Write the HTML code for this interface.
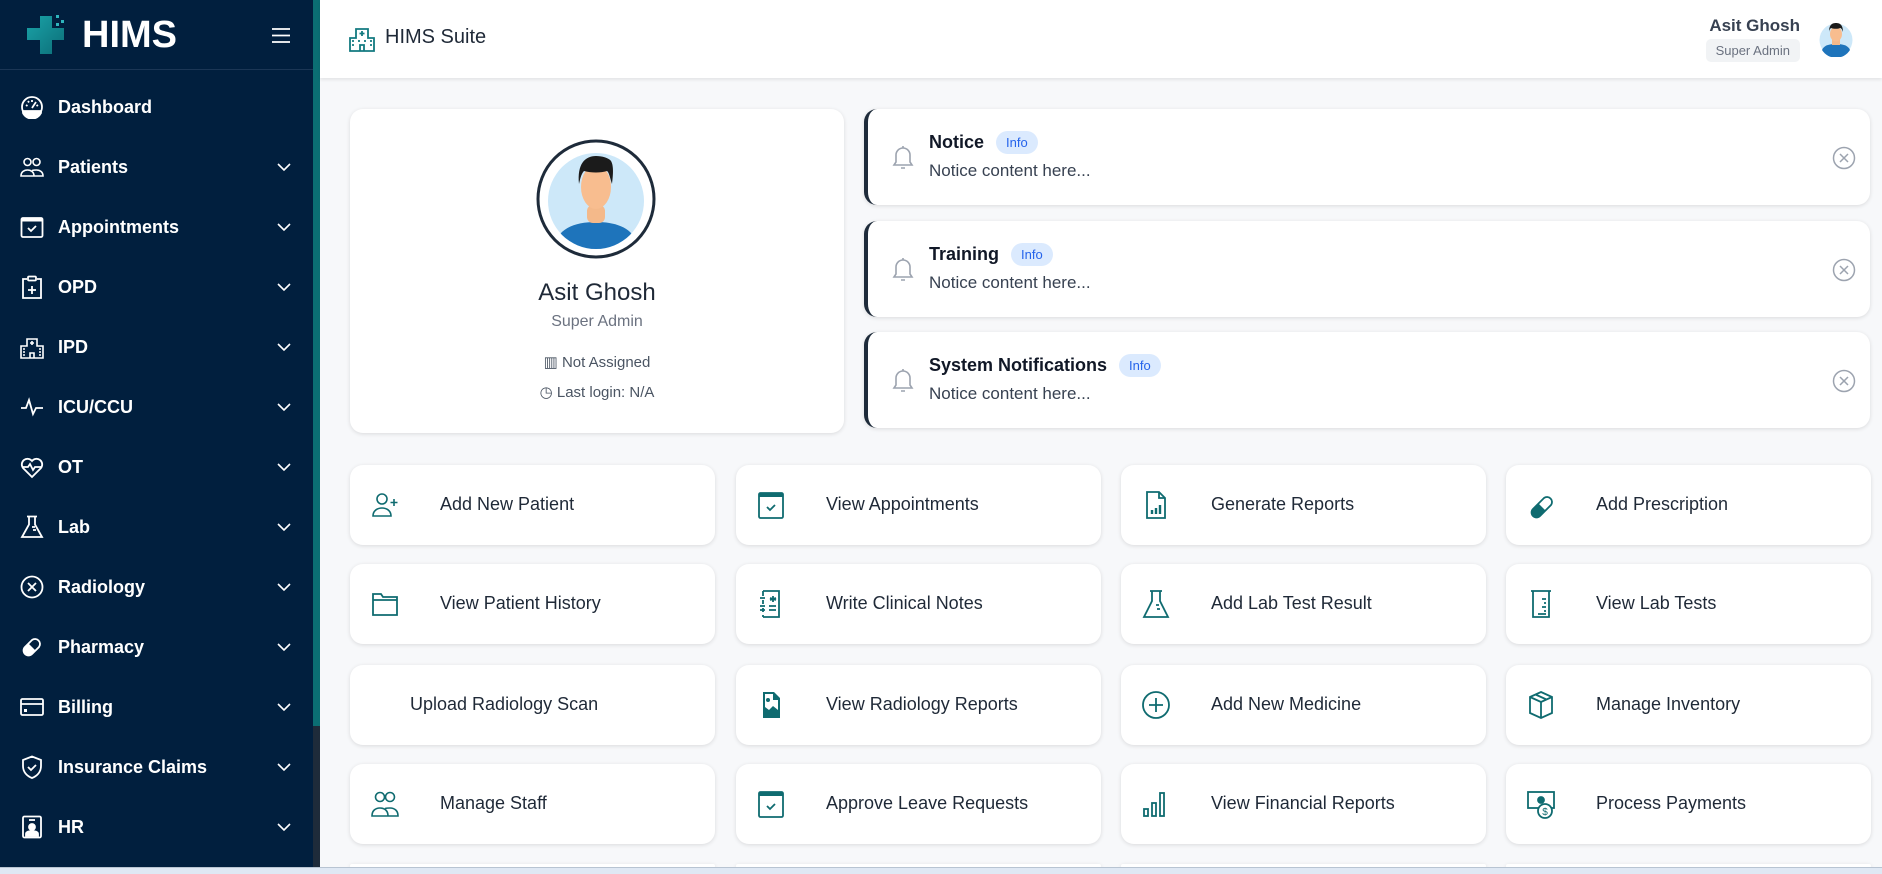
<!DOCTYPE html>
<html><head><meta charset="utf-8"><style>
*{box-sizing:border-box;margin:0;padding:0}
html{width:1882px;height:874px;overflow:hidden}
body{width:1882px;height:874px;overflow:hidden;background:#f7f8fa;font-family:"Liberation Sans",sans-serif;position:relative}
.side{position:absolute;left:0;top:0;width:313px;height:874px;background:#011f3e;color:#fff}
.sb{position:absolute;left:313px;top:0;width:7px;height:726px;background:#0b6e73}
.sb2{position:absolute;left:313px;top:726px;width:7px;height:148px;background:#1e2b3a}
.logo{position:absolute;left:26px;top:12px;height:46px;display:flex;align-items:center}
.logo span{font-size:38px;font-weight:bold;color:#fff;margin-left:12px;letter-spacing:0}
.sep{position:absolute;left:0;top:69px;width:313px;height:1px;background:#1b3655}
.nav{position:absolute;left:0;width:313px;height:60px;display:flex;align-items:center}
.nav svg.i{position:absolute;left:20px;width:24px;height:24px}
.nav span{position:absolute;left:58px;font-size:18px;font-weight:bold}
.nav svg.c{position:absolute;left:276px;width:16px;height:16px}
.head{position:absolute;left:320px;top:0;right:0;height:78px;background:#fff;box-shadow:0 2px 3px rgba(0,0,0,.08)}
.card{position:absolute;background:#fff;border-radius:13px;box-shadow:0 1px 4px rgba(0,0,0,.12)}
.note{position:absolute;left:864px;width:1006px;height:96px;background:#fff;border-radius:13px;border-left:4px solid #1e2b3a;box-shadow:0 1px 4px rgba(0,0,0,.12)}
.note .t{position:absolute;left:61px;top:22px;font-size:18px;font-weight:bold;color:#111827;display:flex;align-items:center}
.note .t b{font-size:13px;font-weight:normal;color:#2563eb;background:#dbeafe;border-radius:12px;padding:4px 10px;margin-left:12px}
.note .d{position:absolute;left:61px;top:52px;font-size:17px;color:#374151}
.note .bell{position:absolute;left:24px;top:36px}
.note .x{position:absolute;right:14px;top:37px}
.act{position:absolute;width:365px;height:80px;background:#fff;border-radius:13px;box-shadow:0 1px 4px rgba(0,0,0,.12)}
.act svg{position:absolute;left:20px;top:25px;width:30px;height:30px}
.act span{position:absolute;left:90px;top:29px;font-size:18px;color:#1f2937}
</style></head><body>
<div class="side">
 <div class="logo">
  <svg width="44" height="42" viewBox="0 0 44 42"><defs><linearGradient id="g" x1="0" y1="0" x2="1" y2="1"><stop offset="0" stop-color="#1aa3a8"/><stop offset="1" stop-color="#0c6e78"/></linearGradient></defs><path d="M14 2h12v12h12v12H26v14H14V26H1V14h13z" fill="url(#g)"/><rect x="30" y="1" width="3" height="3" fill="#2fb5bd"/><rect x="35" y="6" width="3" height="3" fill="#2fb5bd"/><rect x="30" y="9" width="3" height="3" fill="#2fb5bd"/></svg>
  <span>HIMS</span>
 </div>
 <svg style="position:absolute;left:272px;top:28px" width="18" height="15" viewBox="0 0 18 15"><path d="M0 1h18M0 7.5h18M0 14h18" stroke="#fff" stroke-width="1.8"/></svg>
 <div class="sep"></div>
 <div class="nav" style="top:77px"><svg class="i" viewBox="0 0 24 24" fill="none" stroke="#fff" stroke-width="1.8"><circle cx="12" cy="12" r="10"/><path d="M3 16h18v2a10 10 0 0 1-18 0z" fill="#fff"/><path d="M12 13l4-6M6 10l1.5 1M18 10l-1.5 1M12 5v2M8 6l1 1.5"/></svg><span>Dashboard</span></div>
 <div class="nav" style="top:137px"><svg class="i" viewBox="0 0 24 24" fill="none" stroke="#fff" stroke-width="1.6"><circle cx="7.5" cy="7" r="3.5"/><circle cx="16.5" cy="7" r="3.5"/><path d="M1 21c0-4 3-6 6.5-6s6.5 2 6.5 6zM12 15.5c1.3-.4 3-.5 4.5-.5 3.5 0 6.5 2 6.5 6h-9"/></svg><span>Patients</span><svg class="c" viewBox="0 0 16 16"><path d="M2 5l6 6 6-6" stroke="#fff" stroke-width="1.6" fill="none"/></svg></div>
 <div class="nav" style="top:197px"><svg class="i" viewBox="0 0 24 24" fill="none" stroke="#fff" stroke-width="1.8"><rect x="1.5" y="3" width="21" height="19" rx="1.5"/><path d="M1.5 5h21" stroke-width="3"/><path d="M8 13l3 3 5-5"/></svg><span>Appointments</span><svg class="c" viewBox="0 0 16 16"><path d="M2 5l6 6 6-6" stroke="#fff" stroke-width="1.6" fill="none"/></svg></div>
 <div class="nav" style="top:257px"><svg class="i" viewBox="0 0 24 24" fill="none" stroke="#fff" stroke-width="1.8"><path d="M7 4H3v19h18V4h-4"/><rect x="8" y="1.5" width="8" height="4" rx="1"/><path d="M12 11v8M8 15h8"/></svg><span>OPD</span><svg class="c" viewBox="0 0 16 16"><path d="M2 5l6 6 6-6" stroke="#fff" stroke-width="1.6" fill="none"/></svg></div>
 <div class="nav" style="top:317px"><svg class="i" viewBox="0 0 24 24" fill="none" stroke="#fff" stroke-width="1.6"><path d="M1 23V11h6V4h10v7h6v12z"/><path d="M12 6v4M10 8h4M3 14h2M3 17h2M3 20h2M19 14h2M19 17h2M19 20h2M10 23v-5h4v5"/></svg><span>IPD</span><svg class="c" viewBox="0 0 16 16"><path d="M2 5l6 6 6-6" stroke="#fff" stroke-width="1.6" fill="none"/></svg></div>
 <div class="nav" style="top:377px"><svg class="i" viewBox="0 0 24 24" fill="none" stroke="#fff" stroke-width="1.8"><path d="M1 13h5l3-8 4 14 3-6h7"/></svg><span>ICU/CCU</span><svg class="c" viewBox="0 0 16 16"><path d="M2 5l6 6 6-6" stroke="#fff" stroke-width="1.6" fill="none"/></svg></div>
 <div class="nav" style="top:437px"><svg class="i" viewBox="0 0 24 24" fill="none" stroke="#fff" stroke-width="1.8"><path d="M12 22L3 13a5.5 5.5 0 0 1 9-7 5.5 5.5 0 0 1 9 7z"/><path d="M2 12h6l2-3 3 6 2-3h7"/></svg><span>OT</span><svg class="c" viewBox="0 0 16 16"><path d="M2 5l6 6 6-6" stroke="#fff" stroke-width="1.6" fill="none"/></svg></div>
 <div class="nav" style="top:497px"><svg class="i" viewBox="0 0 24 24" fill="none" stroke="#fff" stroke-width="1.8"><path d="M7 1.5h10M9 1.5v8L2 22h20L15 9.5v-8M12 12h3M13 15h3"/></svg><span>Lab</span><svg class="c" viewBox="0 0 16 16"><path d="M2 5l6 6 6-6" stroke="#fff" stroke-width="1.6" fill="none"/></svg></div>
 <div class="nav" style="top:557px"><svg class="i" viewBox="0 0 24 24" fill="none" stroke="#fff" stroke-width="1.8"><circle cx="12" cy="12" r="10.5"/><path d="M8 8l8 8M16 8l-8 8"/></svg><span>Radiology</span><svg class="c" viewBox="0 0 16 16"><path d="M2 5l6 6 6-6" stroke="#fff" stroke-width="1.6" fill="none"/></svg></div>
 <div class="nav" style="top:617px"><svg class="i" viewBox="0 0 24 24"><path d="M5 19a5 5 0 0 1 0-7l7-7a5 5 0 0 1 7 7l-7 7a5 5 0 0 1-7 0z" fill="none" stroke="#fff" stroke-width="1.8"/><path d="M8.5 8.5l7 7-3.5 3.5a5 5 0 0 1-7-7z" fill="#fff"/></svg><span>Pharmacy</span><svg class="c" viewBox="0 0 16 16"><path d="M2 5l6 6 6-6" stroke="#fff" stroke-width="1.6" fill="none"/></svg></div>
 <div class="nav" style="top:677px"><svg class="i" viewBox="0 0 24 24" fill="none" stroke="#fff" stroke-width="1.8"><rect x="1" y="4" width="22" height="16" rx="1.5"/><path d="M1 9h22"/><rect x="4" y="14" width="3" height="3" fill="#fff" stroke="none"/></svg><span>Billing</span><svg class="c" viewBox="0 0 16 16"><path d="M2 5l6 6 6-6" stroke="#fff" stroke-width="1.6" fill="none"/></svg></div>
 <div class="nav" style="top:737px"><svg class="i" viewBox="0 0 24 24" fill="none" stroke="#fff" stroke-width="1.8"><path d="M12 1.5l9 3.5v6c0 6-4 10-9 12-5-2-9-6-9-12V5z"/><path d="M8 12l3 3 5-5"/></svg><span>Insurance Claims</span><svg class="c" viewBox="0 0 16 16"><path d="M2 5l6 6 6-6" stroke="#fff" stroke-width="1.6" fill="none"/></svg></div>
 <div class="nav" style="top:797px"><svg class="i" viewBox="0 0 24 24" fill="none" stroke="#fff" stroke-width="1.8"><rect x="3" y="1.5" width="18" height="21" rx="1.5"/><path d="M9 5h6"/><circle cx="12" cy="12" r="3" fill="#fff"/><path d="M6 21v-2c0-2 3-3 6-3s6 1 6 3v2z" fill="#fff"/></svg><span>HR</span><svg class="c" viewBox="0 0 16 16"><path d="M2 5l6 6 6-6" stroke="#fff" stroke-width="1.6" fill="none"/></svg></div>
</div>
<div class="sb"></div><div class="sb2"></div>
<div class="head">
 <svg style="position:absolute;left:29px;top:27px" width="26" height="25" viewBox="0 0 26 25" fill="none" stroke="#137a80" stroke-width="1.8"><path d="M1 24V11h6V2h12v9h6v13z"/><path d="M13 4v5M10.5 6.5h5M3 14h2M3 18h2M21 14h2M21 18h2M9 14h2M15 14h2M11 24v-6h4v6"/></svg>
 <div style="position:absolute;left:65px;top:26px;font-size:20px;color:#1f2937">HIMS Suite</div>
 <div style="position:absolute;right:82px;top:16px;font-size:17px;font-weight:bold;color:#374151">Asit Ghosh</div>
 <div style="position:absolute;right:82px;top:39px;font-size:13px;color:#6b7280;background:#f1f3f5;border-radius:5px;padding:4px 10px">Super Admin</div>
 <svg style="position:absolute;right:28px;top:20px" width="36" height="37" viewBox="0 0 36 37"><circle cx="18" cy="20" r="16.5" fill="#cde8f9"/><path d="M4 30c2-5 8-6 14-6s12 1 14 6a16.5 16.5 0 0 1-28 0z" fill="#1e74bb"/><rect x="14" y="18" width="8" height="7" fill="#f4b98a"/><ellipse cx="18" cy="14" rx="6" ry="7.5" fill="#f8bd8f"/><path d="M11 12c0-7 3-9 7-9s7 2 7 9c-1-3-2-4-3-4-2 1-6 1-9 0-1 1-2 2-2 4z" fill="#1b1b1b"/></svg>
</div>
<div class="card" style="left:350px;top:109px;width:494px;height:324px">
 <svg style="position:absolute;left:186px;top:30px" width="120" height="120" viewBox="0 0 120 120"><circle cx="60" cy="60" r="58" fill="#fff" stroke="#1e2b3a" stroke-width="3"/><circle cx="60" cy="62" r="48" fill="#cde8f9"/><clipPath id="cp"><circle cx="60" cy="62" r="48"/></clipPath><g clip-path="url(#cp)"><path d="M18 110c2-20 20-27 42-27s40 7 42 27z" fill="#1e74bb"/><rect x="51" y="66" width="18" height="18" rx="6" fill="#f4b98a"/></g><ellipse cx="60" cy="48" rx="15" ry="22" fill="#f8bd8f"/><path d="M43 45c-2-20 6-28 17-28 6 0 13 2 15 5 3 5 2 15 1 23-2-6-3-12-5-13-6 2-16 2-23 0-3 3-4 9-5 13z" fill="#1b1b1b"/></svg>
 <div style="position:absolute;left:0;right:0;top:170px;text-align:center;font-size:24px;color:#1f2937">Asit Ghosh</div>
 <div style="position:absolute;left:0;right:0;top:204px;text-align:center;font-size:16px;color:#6b7280">Super Admin</div>
 <div style="position:absolute;left:0;right:0;top:244px;text-align:center;font-size:15px;color:#4b5563">▥ Not Assigned</div>
 <div style="position:absolute;left:0;right:0;top:274px;text-align:center;font-size:15px;color:#4b5563">◷ Last login: N/A</div>
</div>
<div class="note" style="top:109px"><svg class="bell" width="22" height="26" viewBox="0 0 22 26" fill="none" stroke="#9ca3af" stroke-width="1.6"><path d="M11 3a7 7 0 0 0-7 7v7l-2 3h18l-2-3v-7a7 7 0 0 0-7-7zM11 1v2M9 23h4"/></svg><div class="t">Notice<b>Info</b></div><div class="d">Notice content here...</div><svg class="x" width="24" height="24" viewBox="0 0 24 24" fill="none" stroke="#9ca3af" stroke-width="1.5"><circle cx="12" cy="12" r="10.5"/><path d="M8 8l8 8M16 8l-8 8"/></svg></div>
<div class="note" style="top:221px"><svg class="bell" width="22" height="26" viewBox="0 0 22 26" fill="none" stroke="#9ca3af" stroke-width="1.6"><path d="M11 3a7 7 0 0 0-7 7v7l-2 3h18l-2-3v-7a7 7 0 0 0-7-7zM11 1v2M9 23h4"/></svg><div class="t">Training<b>Info</b></div><div class="d">Notice content here...</div><svg class="x" width="24" height="24" viewBox="0 0 24 24" fill="none" stroke="#9ca3af" stroke-width="1.5"><circle cx="12" cy="12" r="10.5"/><path d="M8 8l8 8M16 8l-8 8"/></svg></div>
<div class="note" style="top:332px"><svg class="bell" width="22" height="26" viewBox="0 0 22 26" fill="none" stroke="#9ca3af" stroke-width="1.6"><path d="M11 3a7 7 0 0 0-7 7v7l-2 3h18l-2-3v-7a7 7 0 0 0-7-7zM11 1v2M9 23h4"/></svg><div class="t">System Notifications<b>Info</b></div><div class="d">Notice content here...</div><svg class="x" width="24" height="24" viewBox="0 0 24 24" fill="none" stroke="#9ca3af" stroke-width="1.5"><circle cx="12" cy="12" r="10.5"/><path d="M8 8l8 8M16 8l-8 8"/></svg></div>

<div class="act" style="left:350px;top:465px"><svg viewBox="0 0 30 30" fill="none" stroke="#0f6b70" stroke-width="1.6"><circle cx="12" cy="9" r="5"/><path d="M3 26c0-5 4-8 9-8s9 3 9 8zM24 9v7M20.5 12.5h7"/></svg><span>Add New Patient</span></div>
<div class="act" style="left:736px;top:465px"><svg viewBox="0 0 30 30" fill="none" stroke="#0f6b70" stroke-width="1.8"><rect x="3" y="3" width="24" height="25" rx="1.5"/><path d="M3 5h24" stroke-width="4"/><path d="M11 17l3 3 5-5"/></svg><span>View Appointments</span></div>
<div class="act" style="left:1121px;top:465px"><svg viewBox="0 0 30 30" fill="none" stroke="#0f6b70" stroke-width="1.8"><path d="M6 2h12l6 6v20H6z"/><path d="M18 2v6h6"/><path d="M11 24v-4M15 24v-6M19 24v-9" stroke-width="2.4"/></svg><span>Generate Reports</span></div>
<div class="act" style="left:1506px;top:465px"><svg viewBox="0 0 30 30"><path d="M7 26a5 5 0 0 1 0-7L18 8a5 5 0 0 1 7 7L14 26a5 5 0 0 1-7 0z" fill="none" stroke="#0f6b70" stroke-width="1.8"/><path d="M12.5 13.5l7 7L14 26a5 5 0 0 1-7-7z" fill="#0f6b70"/></svg><span>Add Prescription</span></div>
<div class="act" style="left:350px;top:564px"><svg viewBox="0 0 30 30" fill="none" stroke="#0f6b70" stroke-width="1.8"><path d="M3 5h8l2 3h14v18H3z"/><path d="M3 11h24"/></svg><span>View Patient History</span></div>
<div class="act" style="left:736px;top:564px"><svg viewBox="0 0 30 30" fill="none" stroke="#0f6b70" stroke-width="1.8"><path d="M7 2h16v26H7"/><path d="M7 2v5M7 11v4M7 19v4M7 26v2M4 9h5M4 17h5M4 21h5M17 7v6M14 9l6 2M20 9l-6 2M13 17h7M13 21h7"/></svg><span>Write Clinical Notes</span></div>
<div class="act" style="left:1121px;top:564px"><svg viewBox="0 0 30 30" fill="none" stroke="#0f6b70" stroke-width="1.8"><path d="M9 2h12M11 2v10L3 28h24L19 12V2M15 16h3M16 20h3"/></svg><span>Add Lab Test Result</span></div>
<div class="act" style="left:1506px;top:564px"><svg viewBox="0 0 30 30" fill="none" stroke="#0f6b70" stroke-width="1.8"><path d="M5 2h20M7 2v26h16V2M16 10h4M18 14h2M16 18h4M18 22h2M12 25h8"/></svg><span>View Lab Tests</span></div>
<div class="act" style="left:350px;top:665px"><span style="left:60px">Upload Radiology Scan</span></div>
<div class="act" style="left:736px;top:665px"><svg viewBox="0 0 30 30"><path d="M7 2h11l6 6v20H7z" fill="#0f6b70"/><path d="M9 4h8v6h5v10l-5-4-4 4-4-3z" fill="#fff"/><circle cx="12" cy="10" r="2" fill="#0f6b70"/></svg><span>View Radiology Reports</span></div>
<div class="act" style="left:1121px;top:665px"><svg viewBox="0 0 30 30" fill="none" stroke="#0f6b70" stroke-width="1.8"><circle cx="15" cy="15" r="13"/><path d="M15 8v14M8 15h14"/></svg><span>Add New Medicine</span></div>
<div class="act" style="left:1506px;top:665px"><svg viewBox="0 0 30 30" fill="none" stroke="#0f6b70" stroke-width="1.8"><path d="M15 2l11 5v16l-11 5-11-5V7zM4 7l11 5 11-5M15 12v16M9.5 4.5l11 5"/></svg><span>Manage Inventory</span></div>
<div class="act" style="left:350px;top:764px"><svg viewBox="0 0 30 30" fill="none" stroke="#0f6b70" stroke-width="1.6"><circle cx="10" cy="8" r="4.5"/><circle cx="20" cy="8" r="4.5"/><path d="M2 27c0-5 3-8 8-8s8 3 8 8zM15 19.5c1.5-.4 3-.5 5-.5 5 0 8 3 8 8H16"/></svg><span>Manage Staff</span></div>
<div class="act" style="left:736px;top:764px"><svg viewBox="0 0 30 30" fill="none" stroke="#0f6b70" stroke-width="1.8"><rect x="3" y="3" width="24" height="25" rx="1.5"/><path d="M3 5h24" stroke-width="4"/><path d="M11 17l3 3 5-5"/></svg><span>Approve Leave Requests</span></div>
<div class="act" style="left:1121px;top:764px"><svg viewBox="0 0 30 30" fill="none" stroke="#0f6b70" stroke-width="1.8"><rect x="3" y="20" width="4" height="7"/><rect x="11" y="14" width="4" height="13"/><rect x="19" y="4" width="4" height="23"/></svg><span>View Financial Reports</span></div>
<div class="act" style="left:1506px;top:764px"><svg viewBox="0 0 30 30" fill="none" stroke="#0f6b70" stroke-width="1.8"><rect x="2" y="3" width="26" height="16"/><circle cx="15" cy="11" r="3" fill="#0f6b70"/><circle cx="19" cy="22" r="7" fill="#fff"/><text x="19" y="26" font-size="10" text-anchor="middle" fill="#0f6b70" stroke="none" font-family="Liberation Sans">$</text></svg><span>Process Payments</span></div>
<div class="act" style="left:350px;top:864px;height:4px"></div><div class="act" style="left:736px;top:864px;height:4px"></div><div class="act" style="left:1121px;top:864px;height:4px"></div><div class="act" style="left:1506px;top:864px;height:4px"></div>
<div style="position:absolute;left:0;top:867px;width:1882px;height:7px;background:#dfe8f4;border-top:1px solid #b8c4d2"></div>
</body></html>
